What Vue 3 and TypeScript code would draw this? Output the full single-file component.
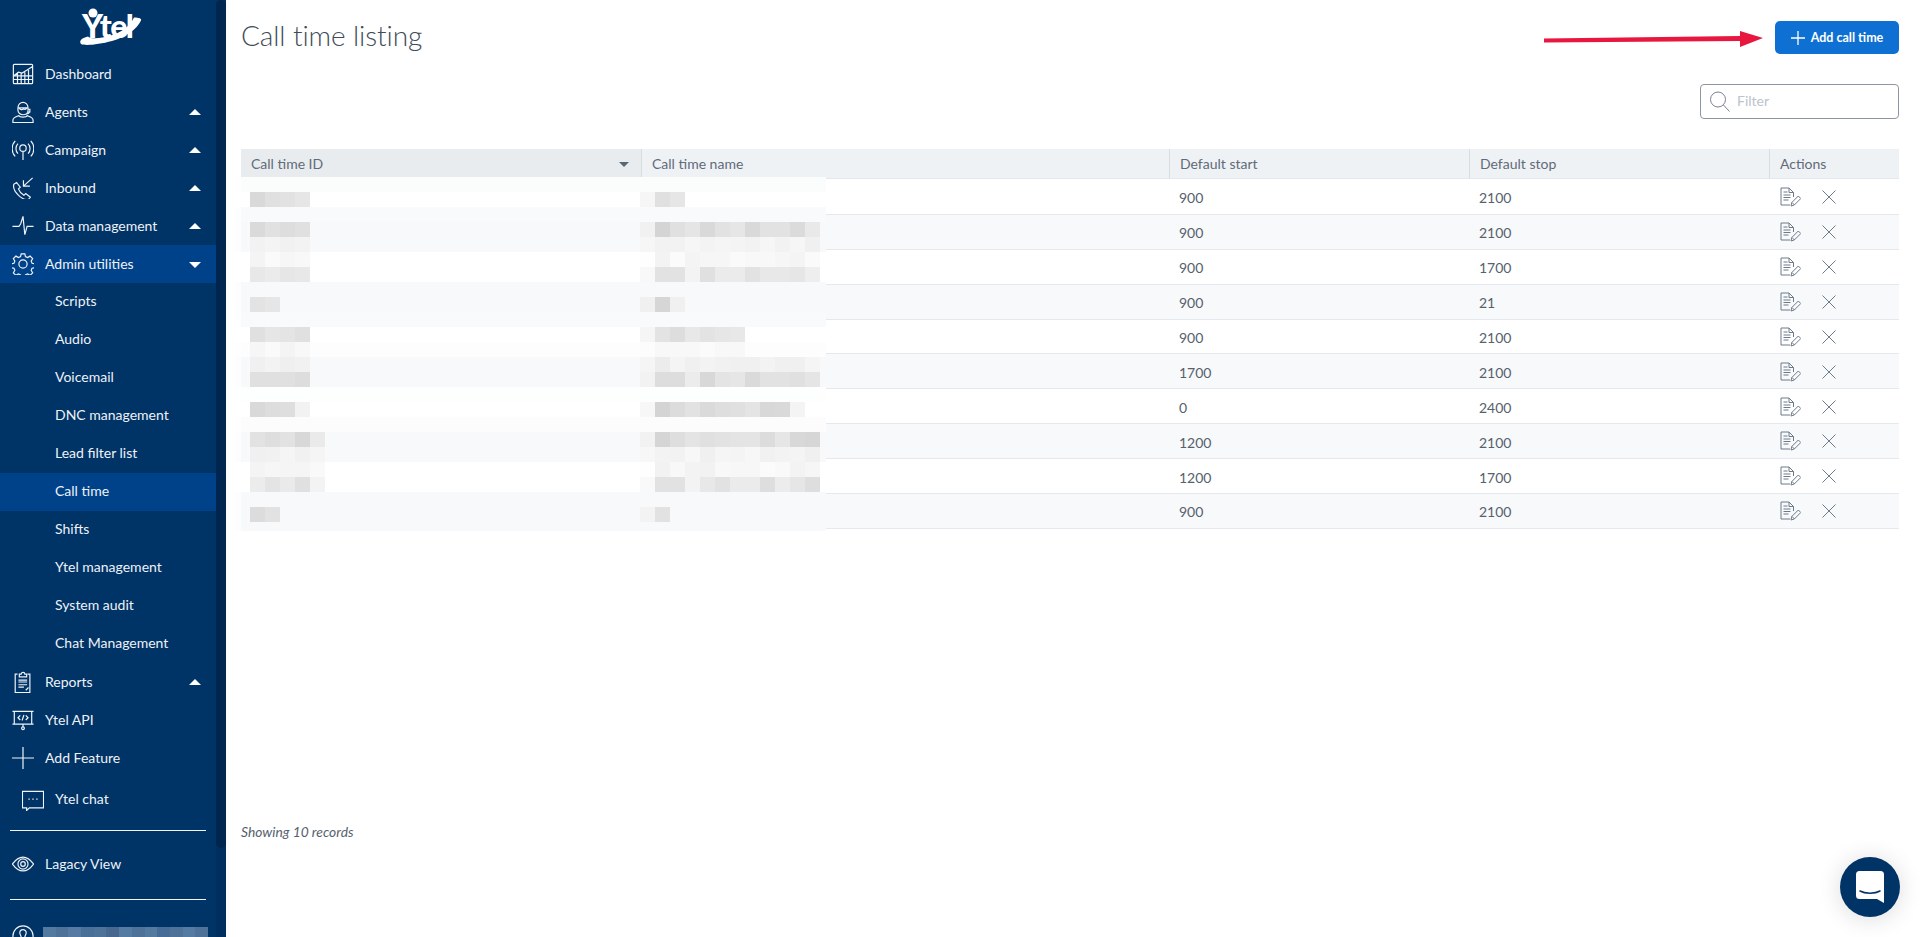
<script setup lang="ts">
type NavItem = { label: string; icon?: string; caret?: 'up' | 'down'; active?: boolean; sub?: boolean; current?: boolean }

const icons: Record<string, string> = {
  dashboard: 'M2.500 1.500h19a1 1 0 0 1 1 1v19a1 1 0 0 1-1 1h-19a1 1 0 0 1-1-1v-19a1 1 0 0 1 1-1z M2 18h20 M2 14h20 M6 11.500V22.500 M10 10v12.500 M14 10v12.500 M18 7.500v15 M2 14l5-4 4 1 5-3 6-4',
  agents: 'M6.500 7.500c0-3.500 2.500-6 5.500-6s5.500 2.500 5.500 6v2.500c0 3-2.500 5-5.500 5s-5.500-2-5.500-5z M6.500 7.500h11 M8 8c1 2 3 1.500 4 1s3 1 4-1 M17.500 9h2v3h-2 M19 12c0 1.500-2 2-4 2.500 M1 23.500v-2.500c0-3 3.500-4 6.500-5 1 2 8 2 9 0 3 1 6.500 2 6.500 5v2.500z',
  campaign: 'M12 13v10 M12 6.500a3.500 3.500 0 1 1 0 7 3.500 3.500 0 0 1 0-7z M6.500 16a8 8 0 0 1 0-11 M17.500 16a8 8 0 0 0 0-11 M3.500 19a12.500 12.500 0 0 1 0-17 M20.500 19a12.500 12.500 0 0 0 0-17',
  inbound: 'M22.500 1l-10 9 M12.500 3.500V10h7 M2 8l3-2 4 5-2 2c1 3 3 5 6 7l2-2 5 4-2 2.500C11 26 0 15 2 8z',
  data: 'M.500 12.500h7l2-3 2.500-8 2 20 2.500-9h7',
  admin: 'M10 1h4l.7 3 2.300 1 2.700-1.600 2.800 2.800-1.600 2.700 1 2.300 3 .7v4l-3 .7-1 2.300 1.600 2.700-2.800 2.800-2.700-1.600-2.300 1-.7 3h-4l-.7-3-2.300-1-2.700 1.600-2.800-2.800 1.600-2.700-1-2.300-3-.7v-4l3-.7 1-2.300-1.600-2.700 2.800-2.800 2.700 1.600 2.300-1z M12 7.500a4.500 4.500 0 1 1 0 9 4.500 4.500 0 0 1 0-9z',
  reports: 'M6 3.500H3.500v20h16v-20H17 M8 3.500h2a2 2 0 0 1 4 0h2v3H8z M7 10h9.500 M7 12h9.500 M7 15h9.500 M7 17.500h6 M15 21l3-3',
  api: 'M.500 2.500h23 M2.500 2.500v14h19v-14 M.500 16.500h23 M12 16.500v3 M12 19.500a1.500 1.500 0 1 1 0 3 1.500 1.500 0 0 1 0-3z M9 7l-2.500 2.500L9 12 M15 7l2.500 2.500L15 12 M13 6.500l-2 6',
  plus: 'M12 0v24 M0 12h24',
  chat: 'M.500 2.500h23v18H8l-3 3v-3H.500z M7 11h1.500 M11.250 11h1.500 M15.500 11H17',
  eye: 'M.500 12c4-5.500 8-7.500 11.500-7.500s7.500 2 11.500 7.500c-4 5.500-8 7.500-11.500 7.500S4.500 17.500.500 12z M12 6.500a5.500 5.500 0 1 1 0 11 5.500 5.500 0 0 1 0-11z M12 9.500a2.500 2.500 0 1 1 0 5 2.500 2.500 0 0 1 0-5z',
}

const nav: NavItem[] = [
  { label: 'Dashboard', icon: 'dashboard' },
  { label: 'Agents', icon: 'agents', caret: 'up' },
  { label: 'Campaign', icon: 'campaign', caret: 'up' },
  { label: 'Inbound', icon: 'inbound', caret: 'up' },
  { label: 'Data management', icon: 'data', caret: 'up' },
  { label: 'Admin utilities', icon: 'admin', caret: 'down', active: true },
  { label: 'Scripts', sub: true },
  { label: 'Audio', sub: true },
  { label: 'Voicemail', sub: true },
  { label: 'DNC management', sub: true },
  { label: 'Lead filter list', sub: true },
  { label: 'Call time', sub: true, current: true },
  { label: 'Shifts', sub: true },
  { label: 'Ytel management', sub: true },
  { label: 'System audit', sub: true },
  { label: 'Chat Management', sub: true },
  { label: 'Reports', icon: 'reports', caret: 'up' },
  { label: 'Ytel API', icon: 'api' },
  { label: 'Add Feature', icon: 'plus' },
]

const rows = [
  [900, 2100], [900, 2100], [900, 1700], [900, 21], [900, 2100],
  [1700, 2100], [0, 2400], [1200, 2100], [1200, 1700], [900, 2100],
]

const g = (s: string) => s.split(' ').filter(Boolean).map((h) => `#${h}${h}${h}`)
const W = 'ffffff', S = 'f8f9fb'
const bands: { bg: string; a: string[]; b: string[] }[] = [
  { bg: '#fbfcfc', a: [], b: [] },
  { bg: '#' + W, a: g('d9 e0 e2 e6'), b: g('f6 e0 e6') },
  { bg: '#f9fafb', a: [], b: [] },
  { bg: '#' + S, a: g('da e1 dd e0'), b: g('f1 d4 e0 e5 d9 e2 e6 d9 e2 e2 db e9') },
  { bg: '#' + S, a: g('f2 f4 f1 f3'), b: g('f6 f2 f2 f6 f3 f5 f4 f2 f6 f2 f6 f0') },
  { bg: '#' + W, a: g('f4 fa f6 f8'), b: g('fe f3 fb f4 f6 f6 fa f8 f8 f6 f4 fa') },
  { bg: '#' + W, a: g('e8 eb e6 e8'), b: g('f8 e2 e2 f3 e0 eb eb e2 e8 e8 e6 ee') },
  { bg: '#' + S, a: [], b: [] },
  { bg: '#' + S, a: g('e3 e6'), b: g('f0 d6 f0') },
  { bg: '#f9fafb', a: [], b: [] },
  { bg: '#' + W, a: g('e0 e6 e4 e0'), b: g('f5 e3 dd e8 e3 e6 e8') },
  { bg: '#fdfdfd', a: g('f6 fa f4 f8'), b: g('fc f8 f8 f8 fb f8 f8') },
  { bg: '#' + S, a: g('f0 f3 ef f1'), b: g('f5 ec f4 f0 f3 f1 f0 f0 f3 f0 f0 f5') },
  { bg: '#' + S, a: g('e0 e0 e0 dd'), b: g('f2 dd dd ec d8 e4 e6 da e2 e2 e0 e5') },
  { bg: '#fdfefe', a: [], b: [] },
  { bg: '#' + W, a: g('d9 dd de f2'), b: g('f7 d4 dc e2 da de e0 e4 d8 d9 f4') },
  { bg: '#fcfcfd', a: [], b: [] },
  { bg: '#' + S, a: g('e2 de e2 d8 ea'), b: g('f2 d5 de e4 e0 e2 e4 e4 dc e6 d8 d6') },
  { bg: '#' + S, a: g('f0 f1 f5 f1 f5'), b: g('f7 f3 f2 f7 f0 f5 f4 f7 f1 f3 f4 f0') },
  { bg: '#' + W, a: g('f4 f6 f5 f5 f9'), b: g('fe f2 f8 f3 f2 f8 f7 f7 fb f9 f3 f6') },
  { bg: '#' + W, a: g('ec e4 ea e0 f3'), b: g('f9 e2 e2 f3 e8 e2 eb eb de ec e6 de') },
  { bg: '#' + S, a: [], b: [] },
  { bg: '#' + S, a: g('dc e2'), b: g('f3 e2') },
  { bg: '#' + S, a: [], b: [] },
]

const profile = ['#557aa0', '#4f7299', '#567aa1', '#4b7098', '#4f7299', '#48688f', '#567ba2', '#4f7299', '#557aa0', '#476c96', '#4f7299', '#567ba2', '#4f7299']
</script>

<template>
  <div class="page">
    <aside class="side">
      <nav class="nav">
        <div class="logo">
          <svg width="72" height="50" viewBox="0 0 72 50">
            <circle cx="18" cy="13" r="4.500" fill="#fff" />
            <text x="7" y="38" class="logo-text">Ytel</text>
            <path d="M6 44c-2-3 0-6 7-7.500 2 3 15 2 26-2 10-4 17-10 20-17 5 0 8 1 7 3-4 9-16 17-29 20.500-13 3.500-27 5-31 3z" fill="#fff" />
          </svg>
        </div>
        <a v-for="item in nav" :key="item.label" class="item"
          :class="{ active: item.active, sub: item.sub, current: item.current }">
          <svg v-if="item.icon" class="ico" viewBox="0 0 24 24"><path :d="icons[item.icon]" /></svg>
          <span>{{ item.label }}</span>
          <i v-if="item.caret" class="caret" :class="item.caret"></i>
        </a>
        <a class="item chat-item">
          <svg class="ico" viewBox="0 0 24 24"><path :d="icons.chat" /></svg>
          <span>Ytel chat</span>
        </a>
        <hr class="rule" />
        <a class="item legacy">
          <svg class="ico" viewBox="0 0 24 24"><path :d="icons.eye" /></svg>
          <span>Lagacy View</span>
        </a>
        <hr class="rule" />
        <div class="profile">
          <svg class="ico" viewBox="0 0 24 24"><path d="M12 1a11 11 0 1 1 0 22 11 11 0 0 1 0-22z M12 5a3.500 3.500 0 0 1 3.500 3.500c0 2-1.500 3-1.500 5v3h-4v-3c0-2-1.500-3-1.500-5A3.500 3.500 0 0 1 12 5z" /></svg>
          <div class="mask"><b v-for="(c, i) in profile" :key="i" :style="{ background: c }"></b></div>
        </div>
      </nav>
      <div class="track"><div class="thumb"></div></div>
    </aside>

    <main class="main">
      <header class="head">
        <h1>Call time listing</h1>
        <button class="add">
          <svg width="14" height="14" viewBox="0 0 14 14"><path d="M7 0v14M0 7h14" stroke="#fff" stroke-width="1.300" /></svg>
          Add call time
        </button>
        <svg class="pointer" width="219" height="20" viewBox="0 0 219 20">
          <path d="M0 9.500 L196 7 L196 2 L219 9 L196 18 L196 12 L0 13.500z" fill="#e8173f" />
        </svg>
      </header>

      <div class="filter-row">
        <label class="filter">
          <svg width="22" height="24" viewBox="0 0 22 24"><path d="M9 2a7.500 7.500 0 1 1 0 15 7.500 7.500 0 0 1 0-15zM14.500 15l6 6.500" fill="none" stroke="#76828f" stroke-width="1" /></svg>
          <span>Filter</span>
        </label>
      </div>

      <div class="table-wrap">
        <table>
          <colgroup>
            <col class="c1" /><col class="c2" /><col class="c3" /><col class="c4" /><col />
          </colgroup>
          <thead>
            <tr>
              <th class="sorted">Call time ID<i class="sort"></i></th>
              <th>Call time name</th>
              <th>Default start</th>
              <th>Default stop</th>
              <th>Actions</th>
            </tr>
          </thead>
          <tbody>
            <tr v-for="(r, i) in rows" :key="i">
              <td></td>
              <td></td>
              <td>{{ r[0] }}</td>
              <td>{{ r[1] }}</td>
              <td class="acts">
                <svg width="21" height="20" viewBox="0 0 21 20" class="edit">
                  <path d="M9 1H1v17h9M9 1l4.500 4.500V10M9 1v4.500h4.500M3.500 5h4M3.500 8h7M3.500 10.500h7M3.500 13h5" />
                  <path d="M11 19l.8-3.500 6.500-6.500 2.500 2.500-6.500 6.500zM12 15.500l2.500 2.500" />
                </svg>
                <svg width="14" height="14" viewBox="0 0 14 14" class="del"><path d="M.5.500l13 13M13.500.500l-13 13" /></svg>
              </td>
            </tr>
          </tbody>
        </table>
        <div class="mosaic">
          <div v-for="(b, i) in bands" :key="i" class="band" :style="{ background: b.bg }">
            <div class="cells first"><b v-for="(c, j) in b.a" :key="j" :style="{ background: c }"></b></div>
            <div class="cells"><b v-for="(c, j) in b.b" :key="j" :style="{ background: c }"></b></div>
          </div>
        </div>
      </div>

      <p class="count">Showing 10 records</p>
    </main>

    <button class="launcher" aria-label="Chat">
      <svg width="28" height="32" viewBox="0 0 28 32">
        <path d="M3.500 0h21A3.500 3.500 0 0 1 28 3.500V32l-7-4H3.500A3.500 3.500 0 0 1 0 24.500v-21A3.500 3.500 0 0 1 3.500 0z" fill="#fff" />
        <path d="M4 20c5 3 15 3 20 0" fill="none" stroke="#003366" stroke-width="1.500" stroke-linecap="round" />
      </svg>
    </button>
  </div>
</template>

<style>
html, body { margin: 0; background: #fff; overflow: hidden; }
</style>

<style scoped>
.page {
  display: flex;
  height: 937px;
  overflow: hidden;
  font-family: Lato, "Liberation Sans", sans-serif;
  font-size: 14px;
  color: #56616d;
}
.side {
  flex: none;
  width: 226px;
  display: flex;
  background: #003366;
  overflow: hidden;
}
.nav { width: 216px; flex: none; color: #eef2f7; }
.track { width: 10px; background: #002f5f; border-radius: 4px 0 0 0; }
.thumb { height: 848px; background: #00264f; border-radius: 6px; }
.logo { height: 55px; display: flex; justify-content: center; padding-left: 6px; box-sizing: border-box; }
.logo-text { font: 900 32px Lato, sans-serif; fill: #fff; letter-spacing: -1.500px; }
.item {
  height: 38px;
  display: flex;
  align-items: center;
  padding-left: 12px;
  gap: 11px;
  position: relative;
  font-size: 14px;
  box-sizing: border-box;
}
.item > span { padding-bottom: 2px; }
.item.sub { padding-left: 55px; }
.item.sub > span { padding-bottom: 4px; }
.item.active, .item.current { background: #00428a; }
.ico { width: 22px; height: 22px; flex: none; fill: none; stroke: #f0f3f7; stroke-width: 1.300; }
.caret {
  position: absolute;
  right: 15px;
  top: 16px;
  border-left: 6px solid transparent;
  border-right: 6px solid transparent;
}
.caret.up { border-bottom: 6px solid #fff; }
.caret.down { border-top: 6px solid #fff; top: 17px; }
.chat-item { padding-left: 22px; margin-top: 2px; height: 41px; margin-bottom: 1px; }
.rule { border: 0; height: 1px; background: #f2f5f8; margin: 10px 10px 0 10px; }
.legacy { margin-top: 14px; margin-bottom: 16px; }
.legacy + .rule { margin-top: 0; }
.profile { display: flex; align-items: flex-start; gap: 9px; padding: 25px 0 0 12px; }
.mask { display: flex; margin-top: 2px; height: 20px; width: 165px; overflow: hidden; }
.mask b { flex: 1; }

.main { flex: 1; min-width: 0; padding: 0 21px 0 15px; box-shadow: inset 6px 0 6px -6px rgba(0, 0, 0, .04); }
.head { position: relative; height: 84px; display: flex; justify-content: space-between; align-items: flex-start; }
h1 { margin: 18px 0 0; font-size: 28px; line-height: 34px; font-weight: 300; color: #414c58; letter-spacing: -.1px; }
.add {
  margin-top: 21px;
  width: 124px;
  height: 33px;
  border: 0;
  border-radius: 5px;
  background: #0d70d2;
  color: #fff;
  font: 700 12.500px Lato, sans-serif;
  display: flex;
  align-items: center;
  justify-content: center;
  gap: 6px;
  padding: 0;
}
.pointer { position: absolute; left: 1303px; top: 29px; }
.filter-row { display: flex; justify-content: flex-end; height: 65px; }
.filter {
  width: 199px;
  height: 35px;
  box-sizing: border-box;
  border: 1px solid #8c97a4;
  border-radius: 4px;
  display: flex;
  align-items: center;
  padding-left: 8px;
  gap: 6px;
  color: #bcc3cc;
  font-size: 14px;
}
.filter span { padding-bottom: 2px; }
.table-wrap { position: relative; }
table { width: 100%; border-collapse: separate; border-spacing: 0; table-layout: fixed; }
.c1 { width: 400px; }
.c2 { width: 528px; }
.c3 { width: 300px; }
.c4 { width: 300px; }
th {
  height: 30px;
  padding: 0 0 0 10px;
  background: #eff2f5;
  font-weight: 400;
  text-align: left;
  color: #5f6b79;
  border-left: 1px solid #d8dde2;
  border-bottom: 1px solid #e4e8ec;
  box-sizing: border-box;
  position: relative;
  font-size: 14px;
}
th:first-child { border-left: 0; }
th.sorted { background: #e8ecef; }
.sort {
  position: absolute;
  right: 12px;
  top: 13px;
  border-left: 5px solid transparent;
  border-right: 5px solid transparent;
  border-top: 5px solid #5a6674;
}
td {
  height: 34.900px;
  padding: 2px 0 0 10px;
  box-sizing: border-box;
  border-bottom: 1px solid #e5e8ec;
  color: #56616d;
}
tbody tr:first-child td { height: 35.900px; }
tbody tr:nth-child(even) td { background: #f8f9fb; }
.acts { vertical-align: middle; padding: 0 0 0 11px; }
.acts svg { vertical-align: middle; fill: none; stroke: #6d7a89; stroke-width: 1; }
.acts .edit { margin-right: 21px; }
.mosaic { position: absolute; left: -6px; top: 28px; width: 591px; height: 354px; overflow: hidden; }
.band { display: flex; height: 15px; }
.cells { display: flex; }
.cells.first {
  width: 405px;
  padding-left: 15px;
  box-sizing: border-box;
  background: linear-gradient(90deg, rgba(255, 255, 255, .7) 6px, transparent 6px);
}
.cells b { width: 15px; height: 15px; display: block; }
.count { margin: 295px 0 0; font-size: 13.800px; font-style: italic; line-height: 15px; color: #56616d; }
.launcher {
  position: fixed;
  left: 1840px;
  top: 857px;
  width: 60px;
  height: 60px;
  border: 0;
  border-radius: 50%;
  background: #003366;
  box-shadow: 0 2px 24px rgba(0, 0, 0, .14);
  display: flex;
  align-items: center;
  justify-content: center;
  padding: 0;
}
</style>
